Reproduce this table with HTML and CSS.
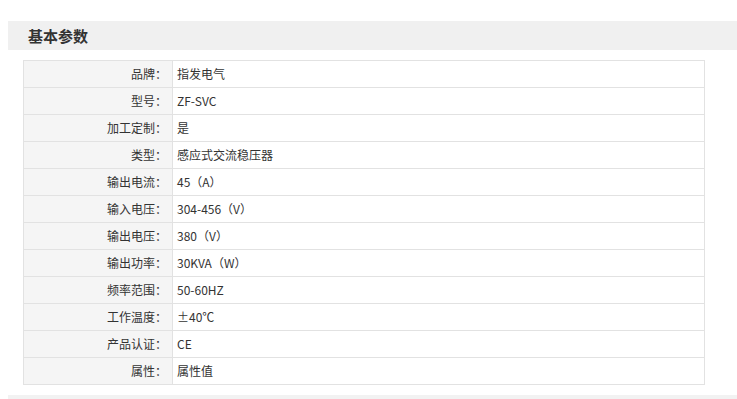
FILE: index.html
```html
<!DOCTYPE html>
<html lang="zh-CN">
<head>
<meta charset="utf-8">
<title>基本参数</title>
<link rel="stylesheet" href="styles.css">
</head>
<body>
<div class="section">
  <h2 class="section-title">基本参数</h2>
  <table class="params">
    <tr><th>品牌：</th><td>指发电气</td></tr>
    <tr><th>型号：</th><td>ZF-SVC</td></tr>
    <tr><th>加工定制：</th><td>是</td></tr>
    <tr><th>类型：</th><td>感应式交流稳压器</td></tr>
    <tr><th>输出电流：</th><td>45（A）</td></tr>
    <tr><th>输入电压：</th><td>304-456（V）</td></tr>
    <tr><th>输出电压：</th><td>380（V）</td></tr>
    <tr><th>输出功率：</th><td>30KVA（W）</td></tr>
    <tr><th>频率范围：</th><td>50-60HZ</td></tr>
    <tr><th>工作温度：</th><td>±40℃</td></tr>
    <tr><th>产品认证：</th><td>CE</td></tr>
    <tr><th>属性：</th><td>属性值</td></tr>
  </table>
  <div class="section-foot"></div>
</div>
</body>
</html>
```
FILE: styles.css
```css
html, body {
  overflow: hidden;
}
body {
  margin: 0;
  padding: 21px 0 0 8px;
  background: #fff;
  color: #333;
  font-family: "Noto Sans CJK SC", "Liberation Sans", sans-serif;
  font-size: 12px;
}
.section-title {
  margin: 0;
  height: 29px;
  line-height: 29px;
  padding-left: 20px;
  background: #f0f0f0;
  font-size: 15px;
  font-weight: bold;
  color: #333;
}
.params {
  margin: 10px 0 0 15px;
  width: 682px;
  border-collapse: collapse;
  border: 1px solid #dcdcdc;
}
.params th,
.params td {
  height: 26px;
  padding: 0;
  border: 1px solid #e2e2e2;
  font-weight: normal;
  line-height: 26px;
  color: #333;
}
.params th {
  width: 143px;
  padding-right: 5px;
  text-align: right;
  background: #f5f5f5;
}
.params td {
  padding-left: 4px;
  text-align: left;
  background: #fff;
}
.section-foot {
  margin-top: 10px;
  height: 10px;
  background: #f2f2f2;
}
```
